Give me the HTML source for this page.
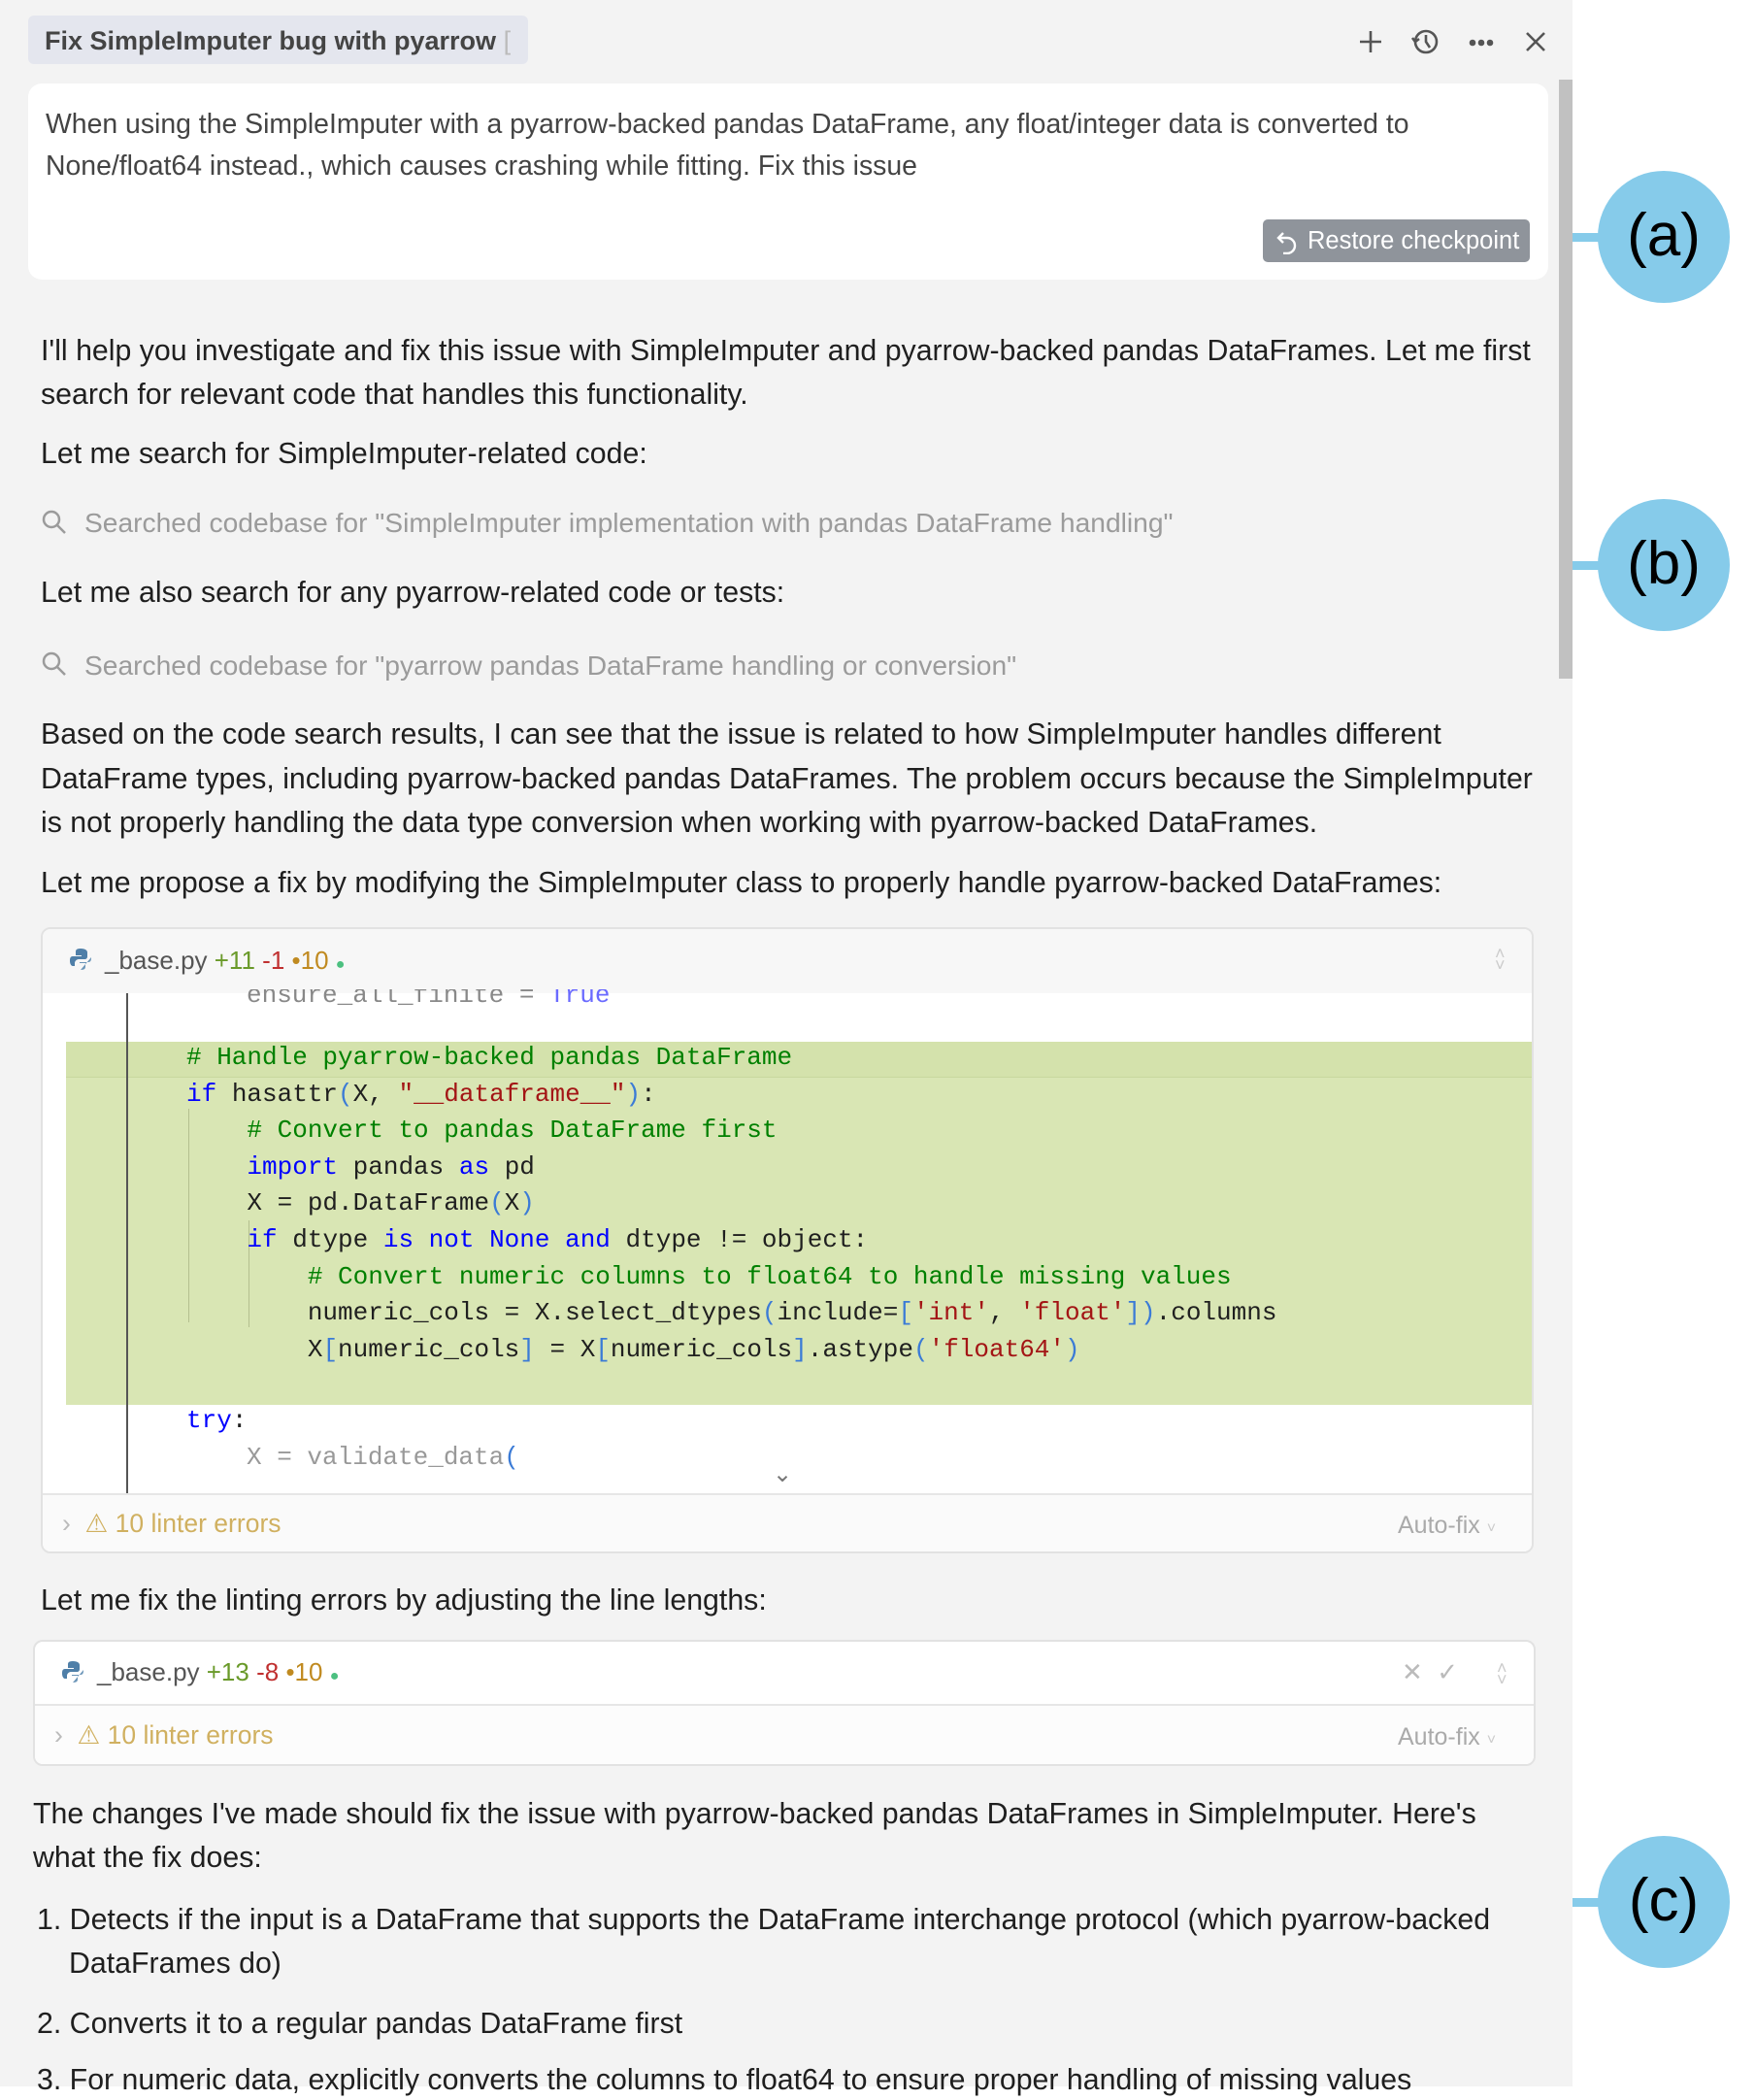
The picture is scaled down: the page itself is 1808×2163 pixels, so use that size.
<!DOCTYPE html>
<html><head><meta charset="utf-8"><style>
*{margin:0;padding:0;box-sizing:border-box}
body{width:1808px;height:2149px;background:#fff;position:relative;overflow:hidden;font-family:"Liberation Sans",sans-serif;color:#1f1f1f}
.panel{position:absolute;left:0;top:0;width:1620px;height:2149px;background:#f3f3f3}
.w{position:absolute;left:0;top:4px;width:1620px;height:2149px}
.t{position:absolute;white-space:nowrap;font-size:30.3px;line-height:40px}
.g{color:#9b9b9b;font-size:28.2px}
.code{position:absolute;white-space:pre;font-family:"Liberation Mono",monospace;font-size:26px;line-height:37.6px;color:#1f1f1f}
.c{color:#008000}.k{color:#0000ff}.s{color:#a31515}.p{color:#3b7bd6}
.circ{position:absolute;width:136px;height:136px;border-radius:50%;background:#86cbea;font-size:62px;text-align:center;line-height:134px;color:#000}
.conn{position:absolute;left:1620px;width:30px;height:9px;background:#86cbea}
</style></head><body>
<div class="panel"></div>
<div style="position:absolute;left:1606px;top:82px;width:14px;height:617px;background:#c1c1c1"></div>
<div style="position:absolute;left:29px;top:16px;width:515px;height:50px;background:#e4e6ee;border-radius:6px"></div>
<div class="t" style="left:46px;top:22px;font-size:27px;font-weight:bold;color:#444">Fix SimpleImputer bug with pyarrow <span style="color:#bbb;font-weight:normal">[</span></div>
<svg style="position:absolute;left:1397px;top:26px" width="200" height="34" viewBox="0 0 200 34" fill="none" stroke="#555" stroke-width="2.6">
<path d="M15 6v22M4 17h22"/>
<circle cx="72" cy="17" r="11"/><path d="M72 10v7l4 6"/><path d="M58 13l3 4 4-3" />
<circle cx="120" cy="18" r="2" fill="#555"/><circle cx="129" cy="18" r="2" fill="#555"/><circle cx="138" cy="18" r="2" fill="#555"/>
<path d="M176 8l18 18M194 8l-18 18"/>
</svg>
<div style="position:absolute;left:29px;top:86px;width:1566px;height:202px;background:#fff;border-radius:14px"></div>
<div class="t" style="left:47px;top:108px;font-size:28.4px;color:#444">When using the SimpleImputer with a pyarrow-backed pandas DataFrame, any float/integer data is converted to</div>
<div class="t" style="left:47px;top:151px;font-size:28.4px;color:#444">None/float64 instead., which causes crashing while fitting. Fix this issue</div>
<div style="position:absolute;left:1301px;top:226px;width:275px;height:44px;background:#8f949b;border-radius:5px;color:#fff;font-size:25.5px;line-height:44px;padding-left:46px;white-space:nowrap">Restore checkpoint</div>
<svg style="position:absolute;left:1314px;top:236px" width="26" height="26" viewBox="0 0 26 26" fill="none" stroke="#fff" stroke-width="2.4"><path d="M8 4L3 9l5 5"/><path d="M3 9h9a8 8 0 0 1 0 16H8"/></svg>
<div class="w">
<div class="t" style="left:42px;top:338px">I'll help you investigate and fix this issue with SimpleImputer and pyarrow-backed pandas DataFrames. Let me first</div>
<div class="t" style="left:42px;top:383px">search for relevant code that handles this functionality.</div>
<div class="t" style="left:42px;top:444px">Let me search for SimpleImputer-related code:</div>
<svg style="position:absolute;left:42px;top:520px" width="28" height="28" viewBox="0 0 28 28" fill="none" stroke="#9b9b9b" stroke-width="2.5"><circle cx="11" cy="11" r="8"/><path d="M17 17l8 8"/></svg>
<div class="t g" style="left:87px;top:514px">Searched codebase for "SimpleImputer implementation with pandas DataFrame handling"</div>
<div class="t" style="left:42px;top:587px">Let me also search for any pyarrow-related code or tests:</div>
<svg style="position:absolute;left:42px;top:666px" width="28" height="28" viewBox="0 0 28 28" fill="none" stroke="#9b9b9b" stroke-width="2.5"><circle cx="11" cy="11" r="8"/><path d="M17 17l8 8"/></svg>
<div class="t g" style="left:87px;top:661px">Searched codebase for "pyarrow pandas DataFrame handling or conversion"</div>
<div class="t" style="left:42px;top:733px">Based on the code search results, I can see that the issue is related to how SimpleImputer handles different</div>
<div class="t" style="left:42px;top:779px">DataFrame types, including pyarrow-backed pandas DataFrames. The problem occurs because the SimpleImputer</div>
<div class="t" style="left:42px;top:824px">is not properly handling the data type conversion when working with pyarrow-backed DataFrames.</div>
<div class="t" style="left:42px;top:886px">Let me propose a fix by modifying the SimpleImputer class to properly handle pyarrow-backed DataFrames:</div>
<div style="position:absolute;left:42px;top:951px;width:1538px;height:645px;background:#fff;border:2px solid #e2e2e2;border-radius:10px;overflow:hidden">
  <div style="position:absolute;left:0;top:0;width:100%;height:66px;background:#f7f7f7"></div>
  <div style="position:absolute;left:24px;top:116px;width:1514px;height:374px;background:#d9e6b4"></div>
  <div style="position:absolute;left:24px;top:116px;width:1514px;height:37px;background:#d4e2ac;border-bottom:1px solid #c8d79e"></div>
  <div style="position:absolute;left:86px;top:66px;width:2px;height:515px;background:#555"></div>
  <div style="position:absolute;left:150px;top:185px;width:1px;height:220px;background:#b5c090"></div>
  <div style="position:absolute;left:212px;top:300px;width:1px;height:110px;background:#b5c090"></div>
  <div style="position:absolute;left:0;top:581px;width:100%;height:64px;background:#fafafa;border-top:2px solid #e6e6e6"></div>
</div>
<svg style="position:absolute;left:72px;top:972px" width="22" height="24" viewBox="0 0 22 24"><path d="M11 1c-5 0-5 2-5 4v3h6v1H3c-3 0-3 3-3 5s1 5 3 5h2v-3c0-2 2-4 4-4h6c2 0 3-1 3-3V5c0-2-2-4-7-4z" fill="#4f7fa8"/><path d="M11 23c5 0 5-2 5-4v-3h-6v-1h9c3 0 3-3 3-5" fill="#6b95b8"/></svg>
<div class="t" style="left:108px;top:965px;font-size:26px;color:#555">_base.py <span style="color:#6a9a2a">+11</span> <span style="color:#c03030">-1</span> <span style="color:#c08a20">•10</span> <span style="color:#4cc080;font-size:16px">●</span></div>
<div style="position:absolute;left:1540px;top:972px;color:#ccc;font-size:18px;line-height:12px">˄<br>˅</div>
<div class="code" style="left:254px;top:1003px;color:#888;clip-path:inset(12px 0 0 0)">ensure_all_finite = <span style="color:#6a6aff">True</span></div>
<div class="code" style="left:192px;top:1067px"><span class="c"># Handle pyarrow-backed pandas DataFrame</span>
<span class="k">if</span> hasattr<span class="p">(</span>X, <span class="s">"__dataframe__"</span><span class="p">)</span>:
    <span class="c"># Convert to pandas DataFrame first</span>
    <span class="k">import</span> pandas <span class="k">as</span> pd
    X = pd.DataFrame<span class="p">(</span>X<span class="p">)</span>
    <span class="k">if</span> dtype <span class="k">is not None and</span> dtype != object:
        <span class="c"># Convert numeric columns to float64 to handle missing values</span>
        numeric_cols = X.select_dtypes<span class="p">(</span>include=<span class="p">[</span><span class="s">'int'</span>, <span class="s">'float'</span><span class="p">])</span>.columns
        X<span class="p">[</span>numeric_cols<span class="p">]</span> = X<span class="p">[</span>numeric_cols<span class="p">]</span>.astype<span class="p">(</span><span class="s">'float64'</span><span class="p">)</span></div>
<div class="code" style="left:192px;top:1441px"><span class="k">try</span>:</div>
<div class="code" style="left:254px;top:1479px;color:#999">X = validate_data<span class="p">(</span></div>
<div style="position:absolute;left:796px;top:1500px;color:#777;font-size:24px">⌄</div>
<div class="t" style="left:64px;top:1545px;font-size:26.5px;color:#d0b060"><span style="color:#bbb">›</span> &nbsp;⚠ 10 linter errors</div>
<div class="t" style="left:1440px;top:1547px;font-size:25px;color:#aaa">Auto-fix <span style="font-size:16px;color:#ccc">˅</span></div>
<div class="t" style="left:42px;top:1625px">Let me fix the linting errors by adjusting the line lengths:</div>
<div style="position:absolute;left:34px;top:1685px;width:1548px;height:130px;background:#fff;border:2px solid #e2e2e2;border-radius:10px;overflow:hidden">
  <div style="position:absolute;left:0;top:64px;width:100%;height:66px;background:#fcfcfc;border-top:2px solid #e6e6e6"></div>
</div>
<svg style="position:absolute;left:64px;top:1706px" width="22" height="24" viewBox="0 0 22 24"><path d="M11 1c-5 0-5 2-5 4v3h6v1H3c-3 0-3 3-3 5s1 5 3 5h2v-3c0-2 2-4 4-4h6c2 0 3-1 3-3V5c0-2-2-4-7-4z" fill="#4f7fa8"/><path d="M11 23c5 0 5-2 5-4v-3h-6v-1h9c3 0 3-3 3-5" fill="#6b95b8"/></svg>
<div class="t" style="left:100px;top:1698px;font-size:26px;color:#555">_base.py <span style="color:#6a9a2a">+13</span> <span style="color:#c03030">-8</span> <span style="color:#c08a20">•10</span> <span style="color:#4cc080;font-size:16px">●</span></div>
<div class="t" style="left:1444px;top:1698px;font-size:26px;color:#bbb">✕ &nbsp;✓</div>
<div style="position:absolute;left:1542px;top:1708px;color:#ccc;font-size:18px;line-height:12px">˄<br>˅</div>
<div class="t" style="left:56px;top:1763px;font-size:26.5px;color:#d0b060"><span style="color:#bbb">›</span> &nbsp;⚠ 10 linter errors</div>
<div class="t" style="left:1440px;top:1765px;font-size:25px;color:#aaa">Auto-fix <span style="font-size:16px;color:#ccc">˅</span></div>
<div class="t" style="left:34px;top:1845px">The changes I've made should fix the issue with pyarrow-backed pandas DataFrames in SimpleImputer. Here's</div>
<div class="t" style="left:34px;top:1890px">what the fix does:</div>
<div class="t" style="left:38px;top:1954px">1. Detects if the input is a DataFrame that supports the DataFrame interchange protocol (which pyarrow-backed</div>
<div class="t" style="left:71px;top:1999px">DataFrames do)</div>
<div class="t" style="left:38px;top:2061px">2. Converts it to a regular pandas DataFrame first</div>
<div class="t" style="left:38px;top:2119px">3. For numeric data, explicitly converts the columns to float64 to ensure proper handling of missing values</div>
</div>
<div class="conn" style="top:240px"></div><div class="circ" style="left:1646px;top:176px">(a)</div>
<div class="conn" style="top:578px"></div><div class="circ" style="left:1646px;top:514px">(b)</div>
<div class="conn" style="top:1955px"></div><div class="circ" style="left:1646px;top:1891px">(c)</div>
</body></html>
